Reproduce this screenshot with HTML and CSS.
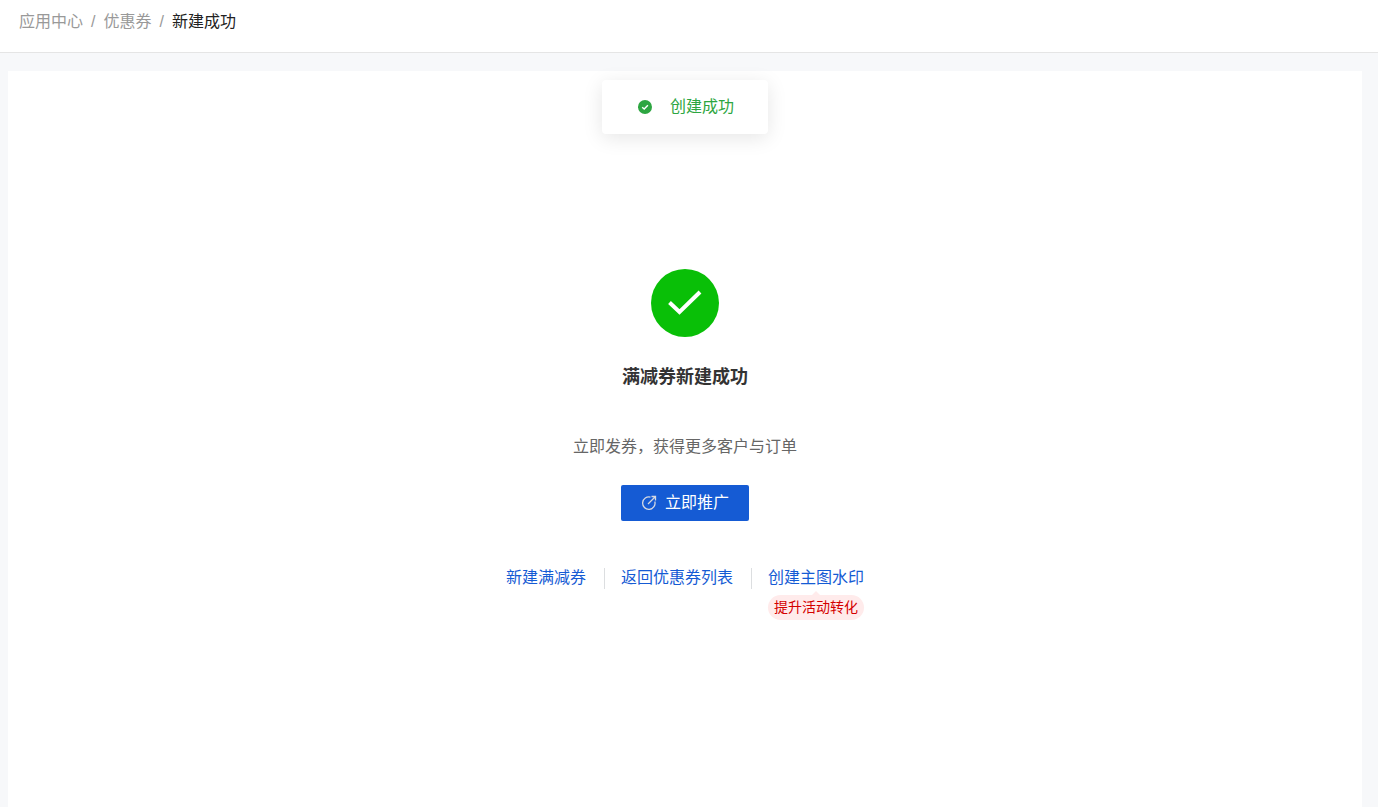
FILE: index.html
```
<!DOCTYPE html>
<html lang="zh-CN">
  <head>
    <meta charset="UTF-8" />
    <meta name="viewport" content="width=device-width, initial-scale=1" />
    <title>新建成功</title>
    <link rel="stylesheet" href="styles.css">
  </head>
  <body>
    <header class="page-header">
      <nav class="breadcrumb">
        <a href="#">应用中心</a>
        <span class="separator">/</span>
        <a href="#">优惠券</a>
        <span class="separator">/</span>
        <span class="current">新建成功</span>
      </nav>
    </header>

    <main class="card">
      <div class="toast" role="status">
        <svg class="toast-icon" viewBox="0 0 14 14">
          <circle cx="7" cy="7" r="7" fill="#2da641" />
          <path d="M4.2 7.3l2 1.8 3.7-3.9" fill="none" stroke="#fff" stroke-width="1.4" />
        </svg>
        <span>创建成功</span>
      </div>

      <section class="result">
        <svg class="result-icon" viewBox="0 0 68 68">
          <circle cx="34" cy="34" r="34" fill="#09bf07" />
          <path d="M18.500 33.500l10 9.500L49 23" fill="none" stroke="#fff" stroke-width="4" />
        </svg>
        <h1 class="result-title">满减券新建成功</h1>
        <p class="result-desc">立即发券，获得更多客户与订单</p>
        <button type="button" class="promote-btn">
          <svg class="promote-icon" viewBox="0 0 16 16" fill="none" stroke="#d5d9e2" stroke-width="1.300">
            <path d="M9.500 2.200A6.200 6.200 0 1 0 13.800 6.500" />
            <path d="M7 9l7-7M10.500 1.500h4v4" />
          </svg>
          <span>立即推广</span>
        </button>
        <div class="links">
          <a href="#">新建满减券</a>
          <a href="#">返回优惠券列表</a>
          <a href="#" class="with-tip">创建主图水印<span class="tip">提升活动转化</span></a>
        </div>
      </section>
    </main>
  </body>
</html>
```
FILE: styles.css
```
:root {
  --blue: #155bd4;
  --page-bg: #f7f8fa;
}

* {
  box-sizing: border-box;
}

body {
  margin: 0;
  min-height: 100vh;
  display: flex;
  flex-direction: column;
  font-family: "Liberation Sans", "Noto Sans CJK SC", sans-serif;
  font-size: 16px;
  line-height: 24px;
  color: #333;
  background: var(--page-bg);
}

a {
  color: var(--blue);
  text-decoration: none;
}

.page-header {
  padding: 10px 19px 18px;
  background: #fff;
  border-bottom: 1px solid #e5e5e5;
}

.breadcrumb {
  display: flex;
  gap: 8px;
}

.breadcrumb a,
.separator {
  color: #999;
}

.current {
  color: #222;
}

.card {
  position: relative;
  flex: 1;
  margin: 18px 16px 0 8px;
  background: #fff;
}

/* toast */
.toast {
  position: absolute;
  top: 9px;
  left: 50%;
  transform: translateX(-50%);
  display: flex;
  align-items: center;
  gap: 18px;
  padding: 15px 34px 15px 36px;
  border-radius: 4px;
  background: #fff;
  color: #2da641;
  white-space: nowrap;
  box-shadow: 0 4px 20px rgba(0, 0, 0, 0.1);
}

.toast-icon {
  width: 14px;
  height: 14px;
}

/* result */
.result {
  display: flex;
  flex-direction: column;
  align-items: center;
  padding: 198px 16px 64px;
}

.result-icon {
  width: 68px;
  height: 68px;
}

.result-title {
  margin: 28px 0 0;
  font-size: 18px;
  line-height: 24px;
}

.result-desc {
  margin: 46px 0 0;
  color: #666;
}

.promote-btn {
  display: flex;
  align-items: center;
  gap: 8px;
  height: 36px;
  margin-top: 26px;
  padding: 0 20px;
  border: none;
  border-radius: 2px;
  background: var(--blue);
  color: #fff;
  font: inherit;
  cursor: pointer;
}

.promote-icon {
  width: 16px;
  height: 16px;
}

.links {
  display: flex;
  align-items: center;
  margin-top: 45px;
}

.links a + a {
  display: flex;
  align-items: center;
}

.links a + a::before {
  content: "";
  width: 1px;
  height: 21px;
  margin: 0 16px 0 18px;
  background: #dcdee0;
}

.with-tip {
  position: relative;
}

.tip {
  position: absolute;
  top: 29px;
  right: 0;
  width: 96px;
  border-radius: 13px;
  background: #ffebeb;
  color: #d40000;
  font-size: 14px;
  line-height: 25px;
  text-align: center;
}

.tip::before {
  content: "";
  position: absolute;
  top: -4px;
  left: 50%;
  margin-left: -4px;
  border: 4px solid transparent;
  border-top: none;
  border-bottom-color: #ffebeb;
}
```
